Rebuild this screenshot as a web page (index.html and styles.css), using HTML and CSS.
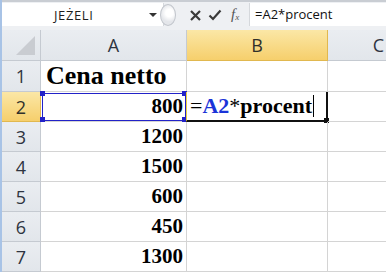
FILE: index.html
```html
<!DOCTYPE html>
<html>
<head>
<meta charset="utf-8">
<link rel="stylesheet" href="styles.css">
</head>
<body>
<div class="app">
  <div class="fbar">
    <div class="namebox">
      <span class="name">JEŻELI</span>
      <span class="arrow"></span>
    </div>
    <div class="grip"></div>
    <div class="tools">
      <svg class="ico" width="11" height="12" viewBox="0 0 11 12"><path d="M1 2 L10 11 M10 2 L1 11" stroke="#3a3a3a" stroke-width="2.2" fill="none"/></svg>
      <svg class="ico" width="14" height="12" viewBox="0 0 14 12"><path d="M1.5 6.5 L5 10 L12.5 1.5" stroke="#3a3a3a" stroke-width="2.2" fill="none"/></svg>
      <span class="fx">f<sub>x</sub></span>
    </div>
    <div class="formula">=A2*procent</div>
  </div>
  <div class="sheet">
    <div class="corner"><span class="tri"></span></div>
    <div class="ch">A</div>
    <div class="ch sel">B</div>
    <div class="ch last">C</div>

    <div class="rh">1</div>
    <div class="c txt">Cena netto</div>
    <div class="c"></div>
    <div class="c last"></div>

    <div class="rh sel">2</div>
    <div class="c num a2">800<i class="h tl"></i><i class="h bl"></i><i class="h br"></i><i class="h tr"></i></div>
    <div class="c b2"><span class="eq">=</span><span class="ref">A2</span><span class="eq">*</span>procent<span class="caret"></span><i class="fill"></i></div>
    <div class="c last"></div>

    <div class="rh">3</div>
    <div class="c num">1200</div>
    <div class="c"></div>
    <div class="c last"></div>

    <div class="rh">4</div>
    <div class="c num">1500</div>
    <div class="c"></div>
    <div class="c last"></div>

    <div class="rh">5</div>
    <div class="c num">600</div>
    <div class="c"></div>
    <div class="c last"></div>

    <div class="rh">6</div>
    <div class="c num">450</div>
    <div class="c"></div>
    <div class="c last"></div>

    <div class="rh">7</div>
    <div class="c num">1300</div>
    <div class="c"></div>
    <div class="c last"></div>
  </div>
</div>
</body>
</html>
```
FILE: styles.css
```css
* { box-sizing: border-box; margin: 0; padding: 0; }
html, body { width: 386px; height: 272px; overflow: hidden; background: #fff; }
.app { width: 386px; height: 272px; border-left: 2px solid #a8c3e6; background: #fff; }
.fbar {
  height: 30px;
  display: flex;
  align-items: center;
  background: #eef0f3;
  border-top: 2px solid #c9cdd3;
  padding-bottom: 4px;
  padding-top: 1px;
}
.namebox {
  width: 162px;
  height: 23px;
  background: #fff;
  display: flex;
  align-items: center;
  padding-left: 52px;
  border-right: 1px solid #d5d8dc;
}
.name { font-family: "Open Sans", "DejaVu Sans", sans-serif; font-size: 13px; color: #1e1e1e; letter-spacing: 0.6px; }
.arrow {
  margin-left: auto;
  margin-right: 6px;
  width: 0; height: 0;
  border-left: 4px solid transparent;
  border-right: 4px solid transparent;
  border-top: 4px solid #333;
}
.grip {
  width: 16px; height: 22px;
  margin-left: -4px;
  border-radius: 50%;
  background: radial-gradient(circle at 60% 40%, #ffffff 0 25%, #e4e6ea 60%);
  border: 1px solid #c2c6cc;
}
.tools {
  display: flex;
  align-items: center;
  gap: 7px;
  padding-left: 14px;
  width: 73px;
  height: 23px;
}
.ico { display: block; }
.fx { font-family: "Liberation Serif", serif; font-style: italic; font-size: 15px; color: #555; line-height: 1; margin-left: 2px; }
.fx sub { font-size: 9px; vertical-align: -1px; }
.formula {
  flex: 1;
  height: 23px;
  background: #fff;
  border-left: 1px solid #d5d8dc;
  padding-left: 5px;
  font-family: "Open Sans", "DejaVu Sans", sans-serif;
  font-size: 13px;
  line-height: 22px;
  color: #111;
}
.sheet {
  display: grid;
  grid-template-columns: 39px 146px 141px 1fr;
  grid-template-rows: 31px 31px repeat(6, 30px);
}
.corner, .ch, .rh {
  background: linear-gradient(#eaedf1, #e2e6eb);
  border-right: 1px solid #c5cad1;
  border-bottom: 1px solid #c5cad1;
  font-family: "Open Sans", "DejaVu Sans", sans-serif;
  color: #2e3440;
  display: flex;
  align-items: center;
  justify-content: center;
}
.corner { position: relative; }
.tri {
  position: absolute; right: 5px; bottom: 5px;
  width: 0; height: 0;
  border-left: 19px solid transparent;
  border-bottom: 19px solid #c9ccd1;
}
.ch { font-size: 18px; }
.ch.last { justify-content: flex-end; padding-right: 2px; border-right: none; }
.rh { font-size: 18px; }
.ch.sel, .rh.sel {
  background: linear-gradient(#fbe7a6, #f6cf6c);
  border-color: #e1b84f;
  color: #30302a;
}
.c {
  border-right: 1px solid #d4d4d4;
  border-bottom: 1px solid #d4d4d4;
  font-family: "Liberation Serif", "Times New Roman", serif;
  font-weight: bold;
  font-size: 21px;
  color: #000;
  display: flex;
  align-items: center;
  position: relative;
}
.c.last { border-right: none; }
.txt { padding-left: 5px; font-size: 26px; }
.num { justify-content: flex-end; padding-right: 3px; }
.a2 { outline: 1px solid #2222c8; outline-offset: -2px; }
.h { position: absolute; width: 5px; height: 5px; background: #2222c8; }
.h.tl { left: -1px; top: -1px; }
.h.tr { right: -1px; top: -1px; }
.h.bl { left: -1px; bottom: -1px; }
.h.br { right: -1px; bottom: -1px; }
.b2 {
  border-left: 1px solid #e8d040;
  border-right: 2px solid #111;
  border-bottom: 2px solid #111;
  margin-left: -1px;
  padding-left: 3px;
  font-size: 22px;
}
.eq { font-weight: normal; }
.ref { color: #1a34d8; }
.caret { display: inline-block; width: 1px; height: 22px; background: #000; margin-left: 1px; }
.fill { position: absolute; right: -3px; bottom: -3px; width: 5px; height: 5px; background: #111; }
```
